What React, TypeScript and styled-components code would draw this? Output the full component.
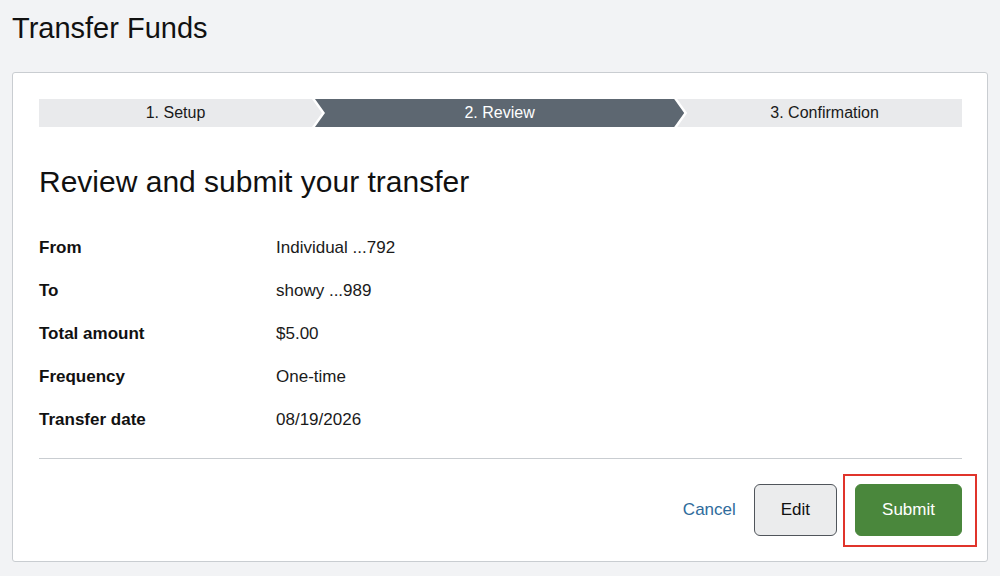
import React from 'react'
import styled, { createGlobalStyle } from 'styled-components'

const GlobalStyle = createGlobalStyle`
    html, body {
        margin: 0;
        padding: 0;
        background: #f2f3f5;
        font-family: "Liberation Sans", Arial, sans-serif;
        color: #1a1a1a;
    }
`

const Page = styled.div`
    box-sizing: border-box;
    width: 1000px;
    height: 576px;
    padding: 10px 12px 0 12px;
`

const PageTitle = styled.h1`
    margin: 0 0 26px 0;
    font-size: 29px;
    line-height: 36px;
    font-weight: normal;
    color: #111;
`

const Card = styled.div`
    box-sizing: border-box;
    height: 490px;
    background: #ffffff;
    border: 1px solid #c9cdd1;
    border-radius: 3px;
    padding: 26px 25px 25px 26px;
    display: flex;
    flex-direction: column;
`

const Steps = styled.div`
    display: flex;
    height: 28px;
`

interface StepProps {
    active?: boolean
    basis: string
    first?: boolean
    last?: boolean
}

const Step = styled.div<StepProps>`
    flex: ${props => props.last ? '1 1 0' : `0 0 ${props.basis}`};
    margin-left: ${props => props.first ? '0' : '-7px'};
    display: flex;
    align-items: center;
    justify-content: center;
    padding-left: ${props => props.first ? '0' : '10px'};
    padding-right: ${props => props.last ? '0' : '10px'};
    box-sizing: border-box;
    font-size: 16px;
    background: ${props => props.active ? '#5d6771' : '#e9eaec'};
    color: ${props => props.active ? '#ffffff' : '#1a1a1a'};
    clip-path: ${props => {
        const right = props.last ? '100% 0, 100% 100%' : 'calc(100% - 10px) 0, 100% 50%, calc(100% - 10px) 100%'
        const left = props.first ? '0 100%' : '0 100%, 10px 50%'
        return `polygon(0 0, ${right}, ${left})`
    }};
`

const Heading = styled.h2`
    margin: 37px 0 26px 0;
    font-size: 30px;
    line-height: 36px;
    font-weight: normal;
    color: #111;
`

const DetailList = styled.dl`
    margin: 0;
    display: grid;
    grid-template-columns: 237px 1fr;
    grid-auto-rows: 43px;
    font-size: 17px;
    line-height: 43px;
`

const Label = styled.dt`
    font-weight: bold;
    color: #111;
`

const Value = styled.dd`
    margin: 0;
    color: #1a1a1a;
`

const Divider = styled.hr`
    margin: 17px 0 0 0;
    border: none;
    border-top: 1px solid #c9cdd1;
`

const Actions = styled.div`
    display: flex;
    justify-content: flex-end;
    align-items: center;
    gap: 18px;
    margin-top: 25px;
`

const CancelLink = styled.a`
    font-size: 17px;
    color: #2e6b9c;
    text-decoration: none;
    cursor: pointer;
`

interface ButtonProps {
    primary?: boolean
}

const Button = styled.button<ButtonProps>`
    box-sizing: border-box;
    height: 52px;
    padding: 0 26px;
    font-family: "Liberation Sans", Arial, sans-serif;
    font-size: 17px;
    border-radius: 6px;
    cursor: pointer;
    background: ${props => props.primary ? '#4a873c' : '#ebeced'};
    color: ${props => props.primary ? '#ffffff' : '#111'};
    border: 1px solid ${props => props.primary ? '#4a873c' : '#50555b'};
`

const Highlight = styled.div`
    position: relative;

    &:after {
        content: '';
        position: absolute;
        top: -10px;
        bottom: -11px;
        left: -12px;
        right: -15px;
        border: 2px solid #e0342b;
        pointer-events: none;
    }
`

const details = [
    { label: 'From', value: 'Individual ...792' },
    { label: 'To', value: 'showy ...989' },
    { label: 'Total amount', value: '$5.00' },
    { label: 'Frequency', value: 'One-time' },
    { label: 'Transfer date', value: '08/19/2026' },
]

const App = (): JSX.Element => {
    return (
        <>
            <GlobalStyle />
            <Page>
                <PageTitle>Transfer Funds</PageTitle>
                <Card>
                    <Steps>
                        <Step first basis="30.66%">1. Setup</Step>
                        <Step active basis="40%">2. Review</Step>
                        <Step last basis="0">3. Confirmation</Step>
                    </Steps>
                    <Heading>Review and submit your transfer</Heading>
                    <DetailList>
                        {details.map(item => (
                            <React.Fragment key={item.label}>
                                <Label>{item.label}</Label>
                                <Value>{item.value}</Value>
                            </React.Fragment>
                        ))}
                    </DetailList>
                    <Divider />
                    <Actions>
                        <CancelLink>Cancel</CancelLink>
                        <Button>Edit</Button>
                        <Highlight>
                            <Button primary>Submit</Button>
                        </Highlight>
                    </Actions>
                </Card>
            </Page>
        </>
    )
}

export default App
